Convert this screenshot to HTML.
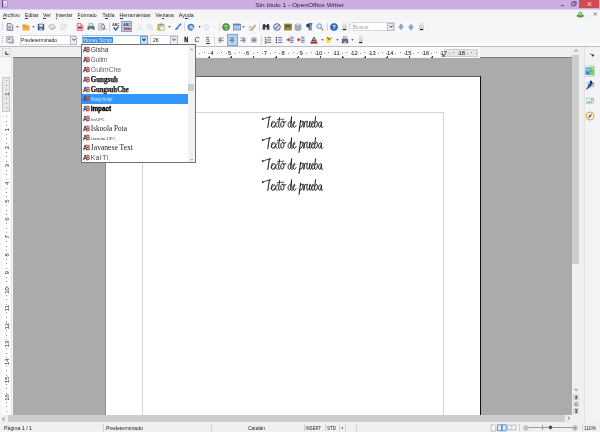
<!DOCTYPE html><html><head><meta charset="utf-8"><title>Sin título 1 - OpenOffice Writer</title><style>
html,body{margin:0;padding:0;}
body{width:600px;height:432px;overflow:hidden;background:#f5f5f8;font-family:"Liberation Sans",sans-serif;}
#r{position:relative;width:600px;height:432px;overflow:hidden;background:#f5f5f8;filter:blur(0.3px);}
#r div,#r span,#r svg{position:absolute;}
.t{white-space:nowrap;line-height:1;}
u{text-decoration:underline;text-decoration-thickness:0.5px;text-underline-offset:0.5px;}
</style></head><body><div id="r">
<div style="left:0px;top:0px;width:600px;height:9.2px;background:#ccade2;"></div>
<div style="left:0;top:8.600px;width:600px;height:1.400px;background:linear-gradient(#ccade2,#f8f4fb)"></div>
<svg style="left:0;top:0;overflow:visible" width="1" height="1"><text x="255.3" y="6.7" font-family="Liberation Sans" font-size="6.1" font-weight="normal" font-style="normal" fill="#2b2430" textLength="88.7" lengthAdjust="spacingAndGlyphs" >Sin título 1 - OpenOffice Writer</text></svg>
<svg style="left:2px;top:0.2px" width="6" height="7.6" viewBox="0 0 6 7.6"><path d="M0.5 0.4h3.400l1.700 1.700v5h-5.100z" fill="#f6f2fb" stroke="#6a5888" stroke-width="0.5"/><path d="M0.7 0.4v6.700" stroke="#3a2c5c" stroke-width="0.9"/><path d="M1.800 3.200l1.200 1.400 1.600-2.200M1.800 5.600h3" stroke="#7a70a8" stroke-width="0.6" fill="none"/></svg>
<div style="left:578.7px;top:0px;width:20px;height:7.7px;background:#d24a50;"></div>
<svg style="left:587px;top:1.6px" width="5" height="4.4" viewBox="0 0 5 4.4"><path d="M0.7 0.4l3.6 3.6M4.3 0.4l-3.6 3.6" stroke="#fff" stroke-width="0.9"/></svg>
<div style="left:560.7px;top:4.6px;width:3.6px;height:0.9px;background:#5a4c7c;"></div>
<svg style="left:570.8px;top:1px" width="6" height="5.5" viewBox="0 0 6 5.5"><rect x="0.6" y="1.8" width="3.4" height="3" fill="none" stroke="#5a4c7c" stroke-width="0.9"/><path d="M1.8 1.6V0.6h3.4v3h-1" fill="none" stroke="#5a4c7c" stroke-width="0.9"/></svg>
<div style="left:0px;top:9.5px;width:600px;height:10.5px;background:#f5f5f8;"></div>
<svg style="left:0;top:0;overflow:visible" width="1" height="1"><text x="2.9" y="17" font-family="Liberation Sans" font-size="5.8" font-weight="normal" font-style="normal" fill="#1c1c1c" textLength="17" lengthAdjust="spacingAndGlyphs" >Archivo</text></svg>
<div style="left:3px;top:17.6px;width:3.2px;height:0.55px;background:#3a3a3a;"></div>
<svg style="left:0;top:0;overflow:visible" width="1" height="1"><text x="25" y="17" font-family="Liberation Sans" font-size="5.8" font-weight="normal" font-style="normal" fill="#1c1c1c" textLength="13.5" lengthAdjust="spacingAndGlyphs" >Editar</text></svg>
<div style="left:25.1px;top:17.6px;width:2.599999999999998px;height:0.55px;background:#3a3a3a;"></div>
<svg style="left:0;top:0;overflow:visible" width="1" height="1"><text x="43" y="17" font-family="Liberation Sans" font-size="5.8" font-weight="normal" font-style="normal" fill="#1c1c1c" textLength="7.8" lengthAdjust="spacingAndGlyphs" >Ver</text></svg>
<div style="left:43.1px;top:17.6px;width:3.1999999999999957px;height:0.55px;background:#3a3a3a;"></div>
<svg style="left:0;top:0;overflow:visible" width="1" height="1"><text x="55.8" y="17" font-family="Liberation Sans" font-size="5.8" font-weight="normal" font-style="normal" fill="#1c1c1c" textLength="16.7" lengthAdjust="spacingAndGlyphs" >Insertar</text></svg>
<div style="left:55.9px;top:17.6px;width:1.2000000000000028px;height:0.55px;background:#3a3a3a;"></div>
<svg style="left:0;top:0;overflow:visible" width="1" height="1"><text x="77.5" y="17" font-family="Liberation Sans" font-size="5.8" font-weight="normal" font-style="normal" fill="#1c1c1c" textLength="19.2" lengthAdjust="spacingAndGlyphs" >Formato</text></svg>
<div style="left:77.7px;top:17.6px;width:2.5999999999999943px;height:0.55px;background:#3a3a3a;"></div>
<svg style="left:0;top:0;overflow:visible" width="1" height="1"><text x="102.5" y="17" font-family="Liberation Sans" font-size="5.8" font-weight="normal" font-style="normal" fill="#1c1c1c" textLength="12" lengthAdjust="spacingAndGlyphs" >Tabla</text></svg>
<div style="left:105.4px;top:17.6px;width:2.5999999999999943px;height:0.55px;background:#3a3a3a;"></div>
<svg style="left:0;top:0;overflow:visible" width="1" height="1"><text x="119.5" y="17" font-family="Liberation Sans" font-size="5.8" font-weight="normal" font-style="normal" fill="#1c1c1c" textLength="31" lengthAdjust="spacingAndGlyphs" >Herramientas</text></svg>
<div style="left:119.7px;top:17.6px;width:3.3999999999999915px;height:0.55px;background:#3a3a3a;"></div>
<svg style="left:0;top:0;overflow:visible" width="1" height="1"><text x="155.5" y="17" font-family="Liberation Sans" font-size="5.8" font-weight="normal" font-style="normal" fill="#1c1c1c" textLength="18.2" lengthAdjust="spacingAndGlyphs" >Ventana</text></svg>
<div style="left:161.6px;top:17.6px;width:2.700000000000017px;height:0.55px;background:#3a3a3a;"></div>
<svg style="left:0;top:0;overflow:visible" width="1" height="1"><text x="178.7" y="17" font-family="Liberation Sans" font-size="5.8" font-weight="normal" font-style="normal" fill="#1c1c1c" textLength="15" lengthAdjust="spacingAndGlyphs" >Ayuda</text></svg>
<div style="left:185.2px;top:17.6px;width:2.8000000000000114px;height:0.55px;background:#3a3a3a;"></div>
<svg style="left:576px;top:11px" width="9" height="7" viewBox="0 0 9 7"><ellipse cx="4.3" cy="5" rx="3.6" ry="1.4" fill="#4d9a3c"/><circle cx="4.3" cy="2.9" r="2.1" fill="#62b04e"/><circle cx="4.3" cy="2.7" r="1" fill="#d8f0d0"/></svg>
<svg style="left:592.5px;top:12.4px" width="4.6" height="4" viewBox="0 0 4.6 4"><path d="M0.5 0.4l3.6 3.2M4.1 0.4l-3.6 3.2" stroke="#5a5a60" stroke-width="0.7"/></svg>
<div style="left:0px;top:20px;width:600px;height:26px;background:#f5f6f8;"></div>
<div style="left:0;top:41.500px;width:600px;height:4.500px;background:linear-gradient(#f5f6f8,#fcfcfd 40%,#fdfdfe)"></div>
<div style="left:0px;top:46px;width:600px;height:1.2px;background:#bcbcc0;"></div>
<div style="left:0px;top:20.5px;width:424.5px;height:12.5px;background:#f8f8fb;"></div>
<div style="left:0px;top:33.5px;width:363.5px;height:12px;background:#f8f8fb;"></div>
<div style="left:2px;top:22px;width:1px;height:1px;background:#b8b8c4;"></div>
<div style="left:2px;top:24px;width:1px;height:1px;background:#b8b8c4;"></div>
<div style="left:2px;top:26px;width:1px;height:1px;background:#b8b8c4;"></div>
<div style="left:2px;top:28px;width:1px;height:1px;background:#b8b8c4;"></div>
<div style="left:2px;top:35.5px;width:1px;height:1px;background:#b8b8c4;"></div>
<div style="left:2px;top:37.5px;width:1px;height:1px;background:#b8b8c4;"></div>
<div style="left:2px;top:39.5px;width:1px;height:1px;background:#b8b8c4;"></div>
<div style="left:2px;top:41.5px;width:1px;height:1px;background:#b8b8c4;"></div>
<svg style="left:6.0px;top:22.5px;" width="8" height="8" viewBox="0 0 8 8"><path d="M1.2 0.6h3.8l1.8 1.8v5h-5.6z" fill="#e9edf4" stroke="#55627a" stroke-width="0.8"/><path d="M2.3 3.2h3M2.3 4.6h3M2.3 6h3" stroke="#6d7890" stroke-width="0.7"/></svg>
<svg style="left:16.0px;top:25.8px" width="3" height="2" viewBox="0 0 3 2"><path d="M0.3 0.3h2.4L1.5 1.7z" fill="#333"/></svg>
<svg style="left:21.5px;top:22.5px;" width="8" height="8" viewBox="0 0 8 8"><path d="M0.6 1.6h3l0.7 0.9h3v4.8h-6.7z" fill="#e88a24"/><path d="M1.4 3.5h5.6l0.6 3.8h-6.8z" fill="#f4ab43"/><path d="M4.2 0.5l2 1.4-1.5 1.6z" fill="#f9d36c"/></svg>
<svg style="left:32.0px;top:25.8px" width="3" height="2" viewBox="0 0 3 2"><path d="M0.3 0.3h2.4L1.5 1.7z" fill="#333"/></svg>
<svg style="left:37.2px;top:22.5px;" width="8" height="8" viewBox="0 0 8 8"><rect x="1.100" y="1" width="5.800" height="6" rx="0.5" fill="#3c5a86" stroke="#2a3e60" stroke-width="0.5"/><rect x="2.200" y="1.400" width="3.600" height="2.400" fill="#dfe8f4"/><rect x="2.600" y="5" width="2.800" height="2" fill="#a9bad3"/></svg>
<svg style="left:48.0px;top:22.5px;" width="8" height="8" viewBox="0 0 8 8"><path d="M0.6 2.6l4.6-1.4 2.4 3-4.8 2z" fill="#e4e6ea" stroke="#9aa0a8" stroke-width="0.6"/><path d="M2.6 6.3l4.8-1.9v1l-4.6 1.8z" fill="#d9b35c"/></svg>
<svg style="left:60.0px;top:22.5px;" width="8" height="8" viewBox="0 0 8 8"><path d="M1 1h4.5v6h-4.5z" fill="#eceef3" stroke="#dcdfe6" stroke-width="0.7"/><path d="M3 5.5l4-4" stroke="#dfe2ea" stroke-width="1.3"/></svg>
<svg style="left:76.0px;top:22.5px;" width="8" height="8" viewBox="0 0 8 8"><path d="M1.2 0.6h3.8l1.8 1.8v5h-5.6z" fill="#f7eeee" stroke="#c25660" stroke-width="0.8"/><path d="M2 3.4h4v2.4h-4z" fill="#c8323e"/><path d="M4.6 0.6v2h2" fill="none" stroke="#c25660" stroke-width="0.6"/></svg>
<svg style="left:86.5px;top:22.5px;" width="8" height="8" viewBox="0 0 8 8"><path d="M2 0.7h4v2.5h-4z" fill="#eef0f0" stroke="#7d8a86" stroke-width="0.6"/><path d="M0.6 3h6.8v3.2h-6.8z" fill="#5f7a74"/><path d="M0.6 5.2h6.8v1.6h-6.8z" fill="#3f5a56"/><path d="M2 5.6h4v1.8h-4z" fill="#e6e9e9"/></svg>
<svg style="left:97.5px;top:22.5px;" width="8" height="8" viewBox="0 0 8 8"><path d="M0.8 0.8h4.6v6.2h-4.6z" fill="#f2f3f6" stroke="#8a8f9a" stroke-width="0.7"/><circle cx="4.8" cy="3.6" r="1.9" fill="#e9eef4" stroke="#5c6470" stroke-width="0.8"/><path d="M6 5l1.6 1.8" stroke="#4c525c" stroke-width="1"/></svg>
<div style="left:109.3px;top:22px;width:0.7px;height:9px;background:#d6d6dc;"></div>
<svg style="left:111.5px;top:22.5px;" width="8" height="8" viewBox="0 0 8 8"><text x="0.3" y="3.2" font-family="Liberation Sans" font-weight="bold" font-size="3.6" fill="#7a2b3a" textLength="7.4" lengthAdjust="spacingAndGlyphs">ABC</text><path d="M1.6 4.4l2.2 2.6 2.8-3.6" stroke="#2f66a8" stroke-width="1.5" fill="none"/></svg>
<div style="left:121px;top:21px;width:11px;height:11px;background:#bcd6f0;box-sizing:border-box;border:0.6px solid #78a9d8"></div>
<svg style="left:122.5px;top:22.5px;" width="8" height="8" viewBox="0 0 8 8"><text x="0.3" y="3.4" font-family="Liberation Sans" font-weight="bold" font-size="3.6" fill="#3a3560" textLength="7.4" lengthAdjust="spacingAndGlyphs">ABC</text><path d="M0.5 5.2q0.9-1 1.75 0t1.75 0 1.75 0 1.75 0" stroke="#c4202c" stroke-width="1.1" fill="none"/><path d="M0.5 6.7h7" stroke="#c4202c" stroke-width="0.7"/></svg>
<svg style="left:136.0px;top:22.5px;" width="8" height="8" viewBox="0 0 8 8"><path d="M2 1l3.5 5M6 1l-3.5 5" stroke="#e1e3ea" stroke-width="0.9"/><circle cx="2.2" cy="6.4" r="1" fill="none" stroke="#e1e3ea" stroke-width="0.7"/><circle cx="5.8" cy="6.4" r="1" fill="none" stroke="#e1e3ea" stroke-width="0.7"/></svg>
<svg style="left:146.0px;top:22.5px;" width="8" height="8" viewBox="0 0 8 8"><path d="M1 1h3.6v4.4h-3.6z" fill="#eef0f4" stroke="#e0e3ea" stroke-width="0.7"/><path d="M3.2 2.8h3.6v4.4h-3.6z" fill="#eef0f4" stroke="#e0e3ea" stroke-width="0.7"/></svg>
<svg style="left:157.0px;top:22.5px;" width="8" height="8" viewBox="0 0 8 8"><path d="M0.8 1.4h6.2v5.8h-6.2z" fill="#d9c24e" stroke="#a08a30" stroke-width="0.6"/><path d="M2.6 0.6h2.6v1.6h-2.6z" fill="#8c8c8c"/><path d="M3 3h4.4v4.4h-4.4z" fill="#eef0e0" stroke="#a8a890" stroke-width="0.5"/></svg>
<svg style="left:167.9px;top:25.8px" width="3" height="2" viewBox="0 0 3 2"><path d="M0.3 0.3h2.4L1.5 1.7z" fill="#333"/></svg>
<svg style="left:173.5px;top:22.5px;" width="8" height="8" viewBox="0 0 8 8"><path d="M7.2 0.6l-3.6 3.6" stroke="#4a78b8" stroke-width="1.5"/><path d="M1 7.2q0.2-2.6 2.4-3.2l1 1q-0.6 2.2-3.4 2.2z" fill="#5a8ccc"/><path d="M2.8 4.6l1.2 1.2" stroke="#2c4f86" stroke-width="0.8"/></svg>
<div style="left:184.3px;top:22px;width:0.7px;height:9px;background:#d6d6dc;"></div>
<svg style="left:187.0px;top:22.5px;" width="8" height="8" viewBox="0 0 8 8"><circle cx="4" cy="4" r="3.3" fill="#a9c8e6"/><path d="M6.6 4.6a2.7 2.7 0 1 0-1.2 1.8" fill="none" stroke="#3d78b4" stroke-width="1.3"/><path d="M0.6 2.2l2.2 0.4-0.8 2z" fill="#2d64a0"/></svg>
<svg style="left:197.5px;top:25.8px" width="3" height="2" viewBox="0 0 3 2"><path d="M0.3 0.3h2.4L1.5 1.7z" fill="#333"/></svg>
<svg style="left:202.0px;top:22.5px;" width="8" height="8" viewBox="0 0 8 8"><circle cx="4" cy="4" r="3.1" fill="#eceff5"/><path d="M1.6 4.6a2.6 2.6 0 1 1 1.2 1.8" fill="none" stroke="#e0e4ec" stroke-width="1.1"/></svg>
<svg style="left:212.5px;top:25.8px" width="3" height="2" viewBox="0 0 3 2"><path d="M0.3 0.3h2.4L1.5 1.7z" fill="#d8dae2"/></svg>
<div style="left:218.6px;top:22px;width:0.7px;height:9px;background:#d6d6dc;"></div>
<svg style="left:221.5px;top:22.5px;" width="8" height="8" viewBox="0 0 8 8"><circle cx="4" cy="4" r="3.5" fill="#5a9a4e" stroke="#3d7036" stroke-width="0.6"/><path d="M2 2.6q2-1.6 3.8 0.2-0.4 1.6-2 1.4T2 2.6z" fill="#9cc888"/><path d="M3 5.4l2.4-0.4-0.4 1.8z" fill="#c0dcb0"/></svg>
<svg style="left:232.5px;top:22.5px;" width="8" height="8" viewBox="0 0 8 8"><rect x="0.6" y="1" width="6.8" height="6" fill="#dfe8f6" stroke="#4c6ea8" stroke-width="0.7"/><rect x="0.6" y="1" width="6.8" height="1.6" fill="#5a7cc0"/><path d="M0.6 4.2h6.8M0.6 5.7h6.8M2.9 1v6M5.2 1v6" stroke="#7c98cc" stroke-width="0.5"/></svg>
<svg style="left:242.2px;top:25.8px" width="3" height="2" viewBox="0 0 3 2"><path d="M0.3 0.3h2.4L1.5 1.7z" fill="#333"/></svg>
<svg style="left:248.0px;top:22.5px;" width="8" height="8" viewBox="0 0 8 8"><path d="M0.8 4.6q1.4-1.6 2.4 0t2 0" stroke="#6f86a8" stroke-width="0.8" fill="none"/><path d="M3.2 6.4l3.6-4.6 1 0.8-3.6 4.6-1.4 0.5z" fill="#d8b860" stroke="#8a7a50" stroke-width="0.4"/><path d="M0.6 6.8h3" stroke="#8c96a8" stroke-width="0.6"/></svg>
<div style="left:258.7px;top:22px;width:0.7px;height:9px;background:#d6d6dc;"></div>
<svg style="left:262.0px;top:22.5px;" width="8" height="8" viewBox="0 0 8 8"><path d="M0.6 3.4q0-2.6 1.4-2.6t1.4 1.6h1.2q0-1.6 1.4-1.6t1.4 2.6v3.4h-2.6v-2.6h-1.6v2.6h-2.6z" fill="#2e3238"/><path d="M1.2 5.2h1.6M5.2 5.2h1.6" stroke="#7d8794" stroke-width="0.6"/></svg>
<svg style="left:272.5px;top:22.5px;" width="8" height="8" viewBox="0 0 8 8"><circle cx="4" cy="4" r="3.3" fill="#dfe6f4" stroke="#4a62b0" stroke-width="1"/><path d="M1.6 6.4l3.4-2.6 1.4-2.2-3.4 2.6z" fill="#c8384a"/><path d="M1.6 6.4l2-2.6 1.4 0z" fill="#7a5a98"/></svg>
<svg style="left:283.5px;top:22.5px;" width="8" height="8" viewBox="0 0 8 8"><rect x="0.5" y="1" width="7" height="6" fill="#a8893c" stroke="#7a6228" stroke-width="0.6"/><rect x="1.8" y="2.4" width="4.4" height="3.2" fill="#4a4434"/><path d="M2.4 5.4l1.2-1.6 1 1 0.8-0.6 0.6 1.2z" fill="#d8c070"/></svg>
<svg style="left:294.0px;top:22.5px;" width="8" height="8" viewBox="0 0 8 8"><path d="M1 1.8v4.6q0 1.1 3 1.1t3-1.1v-4.6z" fill="#a8adb8"/><ellipse cx="4" cy="1.8" rx="3" ry="1.1" fill="#d4d8e0" stroke="#8a909c" stroke-width="0.4"/><path d="M1 1.8v4.6q0 1.1 3 1.1t3-1.1v-4.6" fill="none" stroke="#808692" stroke-width="0.5"/></svg>
<svg style="left:305.0px;top:22.5px;" width="8" height="8" viewBox="0 0 8 8"><path d="M4 0.8h3.4M4.2 0.8v6.6M6 0.8v6.6" stroke="#1f3f7a" stroke-width="1"/><path d="M4.4 0.6q-3.2 0-3.2 2t3.2 2z" fill="#1f3f7a"/></svg>
<svg style="left:315.5px;top:22.5px;" width="8" height="8" viewBox="0 0 8 8"><circle cx="3.2" cy="3.2" r="2.4" fill="#d6e8f6" stroke="#6f9ac4" stroke-width="0.9"/><path d="M5 5l2.4 2.4" stroke="#b08a50" stroke-width="1.3"/></svg>
<div style="left:327px;top:22px;width:0.7px;height:9px;background:#d6d6dc;"></div>
<svg style="left:330.0px;top:22.5px;" width="8" height="8" viewBox="0 0 8 8"><circle cx="4" cy="4" r="3.6" fill="#2f6cc0" stroke="#1f4c94" stroke-width="0.5"/><text x="4" y="6.3" text-anchor="middle" font-family="Liberation Sans" font-weight="bold" font-size="6" fill="#fff">?</text></svg>
<div style="left:342px;top:22px;width:4.5px;height:9px;background:linear-gradient(#f0f0f2,#d0d0d4 70%,#d8d8dc)"></div>
<div style="left:342.5px;top:28.8px;width:3.2px;height:1.4px;background:#222;"></div>
<div style="left:349.3px;top:22px;width:1px;height:1px;background:#b8b8c4;"></div>
<div style="left:349.3px;top:24px;width:1px;height:1px;background:#b8b8c4;"></div>
<div style="left:349.3px;top:26px;width:1px;height:1px;background:#b8b8c4;"></div>
<div style="left:349.3px;top:28px;width:1px;height:1px;background:#b8b8c4;"></div>
<div style="left:352.5px;top:22.3px;width:42px;height:9px;background:#fff;box-sizing:border-box;border:0.6px solid #d4d6de"></div>
<svg style="left:0;top:0;overflow:visible" width="1" height="1"><text x="353.8" y="28.6" font-family="Liberation Sans" font-size="5.6" font-weight="normal" font-style="normal" fill="#a4a6ae" textLength="15" lengthAdjust="spacingAndGlyphs" >Buscar</text></svg>
<div style="left:387px;top:22.8px;width:7px;height:8px;background:#eceef2;box-sizing:border-box;border:0.6px solid #b8bac4"></div>
<svg style="left:388.5px;top:25px" width="4" height="3.5" viewBox="0 0 4 3.5"><path d="M0.5 0.6l1.5 1.9 1.5-1.9" stroke="#333" stroke-width="0.9" fill="none"/></svg>
<svg style="left:396.5px;top:22.5px;" width="8" height="8" viewBox="0 0 8 8"><path d="M3 1.2h2v2.4h1.6l-2.600 3.200-2.600-3.200h1.600z" fill="#8aa8cc" stroke="#6a8ab4" stroke-width="0.4"/></svg>
<svg style="left:407.0px;top:22.5px;" width="8" height="8" viewBox="0 0 8 8"><path d="M3 6.800h2v-2.400h1.600l-2.600-3.200-2.600 3.200h1.600z" fill="#8aa8cc" stroke="#6a8ab4" stroke-width="0.4"/></svg>
<div style="left:419.3px;top:22px;width:4.5px;height:9px;background:linear-gradient(#f0f0f2,#d0d0d4 70%,#d8d8dc)"></div>
<div style="left:419.8px;top:28.8px;width:3.2px;height:1.4px;background:#222;"></div>
<svg style="left:6.0px;top:36.0px;" width="8" height="8" viewBox="0 0 8 8"><rect x="0.8" y="0.8" width="6" height="5.4" fill="#e6e9ee" stroke="#70788a" stroke-width="0.7"/><rect x="1.8" y="1.8" width="2.6" height="2" fill="#8c96aa"/><path d="M3 7.2h4.4V3" fill="none" stroke="#8a90a0" stroke-width="0.7"/></svg>
<div style="left:19.5px;top:35.3px;width:57px;height:9.8px;background:#fff;box-sizing:border-box;border:0.6px solid #d4d6de"></div>
<svg style="left:0;top:0;overflow:visible" width="1" height="1"><text x="21" y="42" font-family="Liberation Sans" font-size="5.7" font-weight="normal" font-style="normal" fill="#222" textLength="36.2" lengthAdjust="spacingAndGlyphs" >Predeterminado</text></svg>
<div style="left:70px;top:35.8px;width:6.5px;height:8.8px;background:#eceef2;box-sizing:border-box;border:0.6px solid #b8bac4"></div>
<svg style="left:71.5px;top:38.4px" width="4" height="3.5" viewBox="0 0 4 3.5"><path d="M0.5 0.6l1.5 1.9 1.5-1.9" stroke="#333" stroke-width="0.9" fill="none"/></svg>
<div style="left:81.5px;top:35.3px;width:66.5px;height:9.8px;background:#fff;box-sizing:border-box;border:0.6px solid #9ec0e4"></div>
<div style="left:83px;top:37px;width:29.5px;height:5.8px;background:#3a8ee6;"></div>
<svg style="left:0;top:0;overflow:visible" width="1" height="1"><text x="83.5" y="41.8" font-family="Liberation Sans" font-size="5.5" font-weight="normal" font-style="normal" fill="#e8f2ff" textLength="28.5" lengthAdjust="spacingAndGlyphs" >Honey Script</text></svg>
<div style="left:139.5px;top:35.8px;width:8px;height:8.8px;background:#c4ddf5;box-sizing:border-box;border:0.6px solid #6aa2d8"></div>
<svg style="left:141.5px;top:38.4px" width="4" height="3.5" viewBox="0 0 4 3.5"><path d="M0.5 0.6l1.5 1.9 1.5-1.9" stroke="#173a6a" stroke-width="1.1" fill="none"/></svg>
<div style="left:150px;top:35.3px;width:28px;height:9.8px;background:#fff;box-sizing:border-box;border:0.6px solid #d4d6de"></div>
<svg style="left:0;top:0;overflow:visible" width="1" height="1"><text x="153" y="42" font-family="Liberation Sans" font-size="5.6" font-weight="normal" font-style="normal" fill="#222" textLength="5.6" lengthAdjust="spacingAndGlyphs" >26</text></svg>
<div style="left:169.5px;top:35.8px;width:8px;height:8.8px;background:#eceef2;box-sizing:border-box;border:0.6px solid #b8bac4"></div>
<svg style="left:171.5px;top:38.4px" width="4" height="3.5" viewBox="0 0 4 3.5"><path d="M0.5 0.6l1.5 1.9 1.5-1.9" stroke="#333" stroke-width="0.9" fill="none"/></svg>
<svg style="left:0;top:0;overflow:visible" width="1" height="1"><text x="184.3" y="42" font-family="Liberation Sans" font-size="7" font-weight="bold" font-style="normal" fill="#111" textLength="4" lengthAdjust="spacingAndGlyphs" stroke="#111" stroke-width="0.3">N</text></svg>
<svg style="left:0;top:0;overflow:visible" width="1" height="1"><text x="194.6" y="42" font-family="Liberation Sans" font-size="7.2" font-weight="normal" font-style="italic" fill="#222" textLength="5" lengthAdjust="spacingAndGlyphs" >C</text></svg>
<svg style="left:0;top:0;overflow:visible" width="1" height="1"><text x="206" y="41.6" font-family="Liberation Sans" font-size="6.8" font-weight="normal" font-style="normal" fill="#222" textLength="3.6" lengthAdjust="spacingAndGlyphs" >S</text></svg>
<div style="left:205.6px;top:42.6px;width:4.2px;height:0.7px;background:#333;"></div>
<div style="left:214.3px;top:35.5px;width:0.7px;height:9px;background:#d6d6dc;"></div>
<svg style="left:217.3px;top:36.0px;" width="8" height="8" viewBox="0 0 8 8"><rect x="1.5" y="1.6" width="5" height="0.8" fill="#6a6e78"/><rect x="1.5" y="2.9000000000000004" width="3.2" height="0.8" fill="#6a6e78"/><rect x="1.5" y="4.2" width="5" height="0.8" fill="#6a6e78"/><rect x="1.5" y="5.5" width="3.2" height="0.8" fill="#6a6e78"/></svg>
<div style="left:227px;top:33.8px;width:10.5px;height:12.2px;background:#b6d6f6;box-sizing:border-box;border:0.6px solid #6aa8e6"></div>
<svg style="left:228.2px;top:36.0px;" width="8" height="8" viewBox="0 0 8 8"><rect x="1.5" y="1.6" width="5" height="0.8" fill="#6a6e78"/><rect x="2.4" y="2.9000000000000004" width="3.2" height="0.8" fill="#6a6e78"/><rect x="1.5" y="4.2" width="5" height="0.8" fill="#6a6e78"/><rect x="2.4" y="5.5" width="3.2" height="0.8" fill="#6a6e78"/></svg>
<svg style="left:239.0px;top:36.0px;" width="8" height="8" viewBox="0 0 8 8"><rect x="1.5" y="1.6" width="5" height="0.8" fill="#6a6e78"/><rect x="3.3" y="2.9000000000000004" width="3.2" height="0.8" fill="#6a6e78"/><rect x="1.5" y="4.2" width="5" height="0.8" fill="#6a6e78"/><rect x="3.3" y="5.5" width="3.2" height="0.8" fill="#6a6e78"/></svg>
<svg style="left:249.7px;top:36.0px;" width="8" height="8" viewBox="0 0 8 8"><rect x="1.5" y="1.6" width="5" height="0.8" fill="#6a6e78"/><rect x="1.5" y="2.9000000000000004" width="5" height="0.8" fill="#6a6e78"/><rect x="1.5" y="4.2" width="5" height="0.8" fill="#6a6e78"/><rect x="1.5" y="5.5" width="5" height="0.8" fill="#6a6e78"/></svg>
<div style="left:260.5px;top:35.5px;width:0.7px;height:9px;background:#d6d6dc;"></div>
<svg style="left:264.0px;top:36.0px;" width="8" height="8" viewBox="0 0 8 8"><path d="M3.2 1.6h4M3.2 4h4M3.2 6.4h4" stroke="#5a5e68" stroke-width="0.9"/><path d="M1.2 0.8v1.8M1 3.2h1v1.6M0.8 5.6h1.4v1.6h-1.4" stroke="#2a2e3a" stroke-width="0.7" fill="none"/></svg>
<svg style="left:274.5px;top:36.0px;" width="8" height="8" viewBox="0 0 8 8"><path d="M3.2 1.6h4M3.2 4h4M3.2 6.4h4" stroke="#3d6aa8" stroke-width="0.9"/><rect x="0.8" y="1" width="1.3" height="1.3" fill="#222"/><rect x="0.8" y="3.4" width="1.3" height="1.3" fill="#222"/><rect x="0.8" y="5.8" width="1.3" height="1.3" fill="#222"/></svg>
<svg style="left:285.5px;top:36.0px;" width="8" height="8" viewBox="0 0 8 8"><path d="M4 1.2h3.6M4 2.9h3.6M4 4.6h3.6M4 6.3h3.6" stroke="#3d6aa8" stroke-width="0.8"/><path d="M0.4 3.8l2.6-2v1.2h1.2v1.6h-1.2v1.2z" fill="#d43a3a"/></svg>
<svg style="left:296.5px;top:36.0px;" width="8" height="8" viewBox="0 0 8 8"><path d="M4 1.2h3.6M4 2.9h3.6M4 4.6h3.6M4 6.3h3.6" stroke="#3d6aa8" stroke-width="0.8"/><path d="M3.6 3.8l-2.6-2v1.2h-0.8v1.6h0.8v1.2z" fill="#d43a3a"/></svg>
<svg style="left:310.0px;top:36.0px;" width="8" height="8" viewBox="0 0 8 8"><path d="M1 5.6l3-5 3 5z" fill="#3a3e48"/><path d="M3 4.2h2l-1-2z" fill="#f5f6fa"/><rect x="0.6" y="5.8" width="6.8" height="1.8" fill="#c0202c"/></svg>
<svg style="left:320.5px;top:39.3px" width="3" height="2" viewBox="0 0 3 2"><path d="M0.3 0.3h2.4L1.5 1.7z" fill="#333"/></svg>
<svg style="left:325.0px;top:36.0px;" width="8" height="8" viewBox="0 0 8 8"><path d="M1 4q0-2 2.4-2.4l2.8 1.2-0.6 3q-1.6 1.6-3.4 1.2T1 4z" fill="#f2e23a"/><path d="M2.4 0.8l3 2.2-1 1.2-2.8-2.2z" fill="#7a7440"/><path d="M5.4 3l1.6-1.4" stroke="#55555a" stroke-width="0.8"/></svg>
<svg style="left:335.5px;top:39.3px" width="3" height="2" viewBox="0 0 3 2"><path d="M0.3 0.3h2.4L1.5 1.7z" fill="#333"/></svg>
<svg style="left:340.5px;top:36.0px;" width="8" height="8" viewBox="0 0 8 8"><path d="M2.2 0.6h3.2v2.2h-3.2z" fill="#dfe3e8" stroke="#5a6270" stroke-width="0.5"/><path d="M0.8 2.8h6.4v2.6h-6.4z" fill="#5f6f88"/><path d="M0.8 5.4h6.4v1.8h-6.4z" fill="#2f3f5a"/><path d="M2.4 5.8h3.2v1h-3.2z" fill="#dfe3e8"/></svg>
<svg style="left:351.0px;top:39.3px" width="3" height="2" viewBox="0 0 3 2"><path d="M0.3 0.3h2.4L1.5 1.7z" fill="#333"/></svg>
<div style="left:358.5px;top:35px;width:4.5px;height:9px;background:linear-gradient(#f0f0f2,#d0d0d4 70%,#d8d8dc)"></div>
<div style="left:359.0px;top:41.8px;width:3.2px;height:1.4px;background:#222;"></div>
<div style="left:0px;top:47px;width:600px;height:11px;background:#f0f0f0;"></div>
<div style="left:12.5px;top:58px;width:559.5px;height:357px;background:#ababab;"></div>
<div style="left:12.5px;top:57.2px;width:559.5px;height:1.1px;background:#7c7c7c;"></div>
<div style="left:106px;top:76px;width:374px;height:339px;background:#ffffff;"></div>
<div style="left:105.6px;top:75.8px;width:374.4px;height:0.8px;background:#606060;"></div>
<div style="left:105.2px;top:76px;width:0.9px;height:339px;background:#8c8c8c;"></div>
<div style="left:479.5px;top:76px;width:1.2px;height:339px;background:#111;"></div>
<div style="left:142px;top:112px;width:302px;height:0.6px;background:#d4d4d4;"></div>
<div style="left:142px;top:112px;width:0.6px;height:303px;background:#d4d4d4;"></div>
<div style="left:443.4px;top:112px;width:0.6px;height:303px;background:#d4d4d4;"></div>
<div style="left:0px;top:58px;width:12.5px;height:357px;background:#f7f7f7;"></div>
<div style="left:11.3px;top:58px;width:1.2px;height:357px;background:#e4e4e4;"></div>
<div style="left:2px;top:77px;width:8.4px;height:35px;background:#e8e8e8;box-sizing:border-box;border:0.5px solid #c8c8c8"></div>
<div style="left:2px;top:112px;width:8.4px;height:303px;background:#fefefe;"></div>
<div style="left:572px;top:47px;width:11.5px;height:375px;background:#f0f0f0;"></div>
<div style="left:572.2px;top:54.5px;width:7.2px;height:209px;background:#cdcdcd;"></div>
<div style="left:0px;top:415px;width:572px;height:7px;background:#f0f0f0;"></div>
<div style="left:7.5px;top:415.3px;width:557.3px;height:6.4px;background:#cdcdcd;"></div>
<div style="left:583.5px;top:47px;width:16.5px;height:375px;background:#f3f3f5;"></div>
<div style="left:583.5px;top:47px;width:0.6px;height:375px;background:#e2e2e6;"></div>
<div style="left:106px;top:47px;width:374px;height:11px;background:#fbfbfb;"></div>
<div style="left:106.3px;top:48.6px;width:35.4px;height:8.2px;background:#e6e6e6;box-sizing:border-box;border:0.5px solid #cfcfcf"></div>
<div style="left:443.6px;top:48.6px;width:34.8px;height:8.2px;background:#e6e6e6;box-sizing:border-box;border:0.5px solid #cfcfcf"></div>
<div style="left:114.275px;top:52.2px;width:0.7px;height:1.3px;background:#8a8a8a;"></div>
<div style="left:109.81250000000001px;top:52.5px;width:0.7px;height:0.8px;background:#9a9a9a;"></div>
<div style="left:118.73750000000001px;top:52.5px;width:0.7px;height:0.8px;background:#9a9a9a;"></div>
<svg style="left:0;top:0;overflow:visible" width="1" height="1"><text x="122.55000000000001" y="55.4" font-family="Liberation Sans" font-size="5.8" font-weight="normal" font-style="normal" fill="#111" text-anchor="middle">1</text></svg>
<div style="left:132.12500000000003px;top:52.2px;width:0.7px;height:1.3px;background:#8a8a8a;"></div>
<div style="left:127.66250000000002px;top:52.5px;width:0.7px;height:0.8px;background:#9a9a9a;"></div>
<div style="left:136.5875px;top:52.5px;width:0.7px;height:0.8px;background:#9a9a9a;"></div>
<div style="left:149.97500000000002px;top:52.2px;width:0.7px;height:1.3px;background:#8a8a8a;"></div>
<div style="left:145.51250000000002px;top:52.5px;width:0.7px;height:0.8px;background:#9a9a9a;"></div>
<div style="left:154.4375px;top:52.5px;width:0.7px;height:0.8px;background:#9a9a9a;"></div>
<svg style="left:0;top:0;overflow:visible" width="1" height="1"><text x="158.25" y="55.4" font-family="Liberation Sans" font-size="5.8" font-weight="normal" font-style="normal" fill="#111" text-anchor="middle">1</text></svg>
<div style="left:167.82500000000002px;top:52.2px;width:0.7px;height:1.3px;background:#8a8a8a;"></div>
<div style="left:163.3625px;top:52.5px;width:0.7px;height:0.8px;background:#9a9a9a;"></div>
<div style="left:172.2875px;top:52.5px;width:0.7px;height:0.8px;background:#9a9a9a;"></div>
<svg style="left:0;top:0;overflow:visible" width="1" height="1"><text x="176.10000000000002" y="55.4" font-family="Liberation Sans" font-size="5.8" font-weight="normal" font-style="normal" fill="#111" text-anchor="middle">2</text></svg>
<div style="left:185.67500000000004px;top:52.2px;width:0.7px;height:1.3px;background:#8a8a8a;"></div>
<div style="left:181.21250000000003px;top:52.5px;width:0.7px;height:0.8px;background:#9a9a9a;"></div>
<div style="left:190.13750000000002px;top:52.5px;width:0.7px;height:0.8px;background:#9a9a9a;"></div>
<svg style="left:0;top:0;overflow:visible" width="1" height="1"><text x="193.95000000000002" y="55.4" font-family="Liberation Sans" font-size="5.8" font-weight="normal" font-style="normal" fill="#111" text-anchor="middle">3</text></svg>
<div style="left:203.52500000000003px;top:52.2px;width:0.7px;height:1.3px;background:#8a8a8a;"></div>
<div style="left:199.06250000000003px;top:52.5px;width:0.7px;height:0.8px;background:#9a9a9a;"></div>
<div style="left:207.9875px;top:52.5px;width:0.7px;height:0.8px;background:#9a9a9a;"></div>
<svg style="left:0;top:0;overflow:visible" width="1" height="1"><text x="211.8" y="55.4" font-family="Liberation Sans" font-size="5.8" font-weight="normal" font-style="normal" fill="#111" text-anchor="middle">4</text></svg>
<div style="left:221.37500000000003px;top:52.2px;width:0.7px;height:1.3px;background:#8a8a8a;"></div>
<div style="left:216.91250000000002px;top:52.5px;width:0.7px;height:0.8px;background:#9a9a9a;"></div>
<div style="left:225.8375px;top:52.5px;width:0.7px;height:0.8px;background:#9a9a9a;"></div>
<svg style="left:0;top:0;overflow:visible" width="1" height="1"><text x="229.65" y="55.4" font-family="Liberation Sans" font-size="5.8" font-weight="normal" font-style="normal" fill="#111" text-anchor="middle">5</text></svg>
<div style="left:239.22500000000002px;top:52.2px;width:0.7px;height:1.3px;background:#8a8a8a;"></div>
<div style="left:234.76250000000002px;top:52.5px;width:0.7px;height:0.8px;background:#9a9a9a;"></div>
<div style="left:243.6875px;top:52.5px;width:0.7px;height:0.8px;background:#9a9a9a;"></div>
<svg style="left:0;top:0;overflow:visible" width="1" height="1"><text x="247.5" y="55.4" font-family="Liberation Sans" font-size="5.8" font-weight="normal" font-style="normal" fill="#111" text-anchor="middle">6</text></svg>
<div style="left:257.075px;top:52.2px;width:0.7px;height:1.3px;background:#8a8a8a;"></div>
<div style="left:252.6125px;top:52.5px;width:0.7px;height:0.8px;background:#9a9a9a;"></div>
<div style="left:261.53749999999997px;top:52.5px;width:0.7px;height:0.8px;background:#9a9a9a;"></div>
<svg style="left:0;top:0;overflow:visible" width="1" height="1"><text x="265.35" y="55.4" font-family="Liberation Sans" font-size="5.8" font-weight="normal" font-style="normal" fill="#111" text-anchor="middle">7</text></svg>
<div style="left:274.925px;top:52.2px;width:0.7px;height:1.3px;background:#8a8a8a;"></div>
<div style="left:270.4625px;top:52.5px;width:0.7px;height:0.8px;background:#9a9a9a;"></div>
<div style="left:279.3875px;top:52.5px;width:0.7px;height:0.8px;background:#9a9a9a;"></div>
<svg style="left:0;top:0;overflow:visible" width="1" height="1"><text x="283.20000000000005" y="55.4" font-family="Liberation Sans" font-size="5.8" font-weight="normal" font-style="normal" fill="#111" text-anchor="middle">8</text></svg>
<div style="left:292.77500000000003px;top:52.2px;width:0.7px;height:1.3px;background:#8a8a8a;"></div>
<div style="left:288.3125px;top:52.5px;width:0.7px;height:0.8px;background:#9a9a9a;"></div>
<div style="left:297.2375px;top:52.5px;width:0.7px;height:0.8px;background:#9a9a9a;"></div>
<svg style="left:0;top:0;overflow:visible" width="1" height="1"><text x="301.05" y="55.4" font-family="Liberation Sans" font-size="5.8" font-weight="normal" font-style="normal" fill="#111" text-anchor="middle">9</text></svg>
<div style="left:310.625px;top:52.2px;width:0.7px;height:1.3px;background:#8a8a8a;"></div>
<div style="left:306.16249999999997px;top:52.5px;width:0.7px;height:0.8px;background:#9a9a9a;"></div>
<div style="left:315.0875px;top:52.5px;width:0.7px;height:0.8px;background:#9a9a9a;"></div>
<svg style="left:0;top:0;overflow:visible" width="1" height="1"><text x="318.9" y="55.4" font-family="Liberation Sans" font-size="5.8" font-weight="normal" font-style="normal" fill="#111" text-anchor="middle">10</text></svg>
<div style="left:328.47499999999997px;top:52.2px;width:0.7px;height:1.3px;background:#8a8a8a;"></div>
<div style="left:324.01249999999993px;top:52.5px;width:0.7px;height:0.8px;background:#9a9a9a;"></div>
<div style="left:332.93749999999994px;top:52.5px;width:0.7px;height:0.8px;background:#9a9a9a;"></div>
<svg style="left:0;top:0;overflow:visible" width="1" height="1"><text x="336.75" y="55.4" font-family="Liberation Sans" font-size="5.8" font-weight="normal" font-style="normal" fill="#111" text-anchor="middle">11</text></svg>
<div style="left:346.325px;top:52.2px;width:0.7px;height:1.3px;background:#8a8a8a;"></div>
<div style="left:341.86249999999995px;top:52.5px;width:0.7px;height:0.8px;background:#9a9a9a;"></div>
<div style="left:350.78749999999997px;top:52.5px;width:0.7px;height:0.8px;background:#9a9a9a;"></div>
<svg style="left:0;top:0;overflow:visible" width="1" height="1"><text x="354.6" y="55.4" font-family="Liberation Sans" font-size="5.8" font-weight="normal" font-style="normal" fill="#111" text-anchor="middle">12</text></svg>
<div style="left:364.175px;top:52.2px;width:0.7px;height:1.3px;background:#8a8a8a;"></div>
<div style="left:359.7125px;top:52.5px;width:0.7px;height:0.8px;background:#9a9a9a;"></div>
<div style="left:368.6375px;top:52.5px;width:0.7px;height:0.8px;background:#9a9a9a;"></div>
<svg style="left:0;top:0;overflow:visible" width="1" height="1"><text x="372.45000000000005" y="55.4" font-family="Liberation Sans" font-size="5.8" font-weight="normal" font-style="normal" fill="#111" text-anchor="middle">13</text></svg>
<div style="left:382.02500000000003px;top:52.2px;width:0.7px;height:1.3px;background:#8a8a8a;"></div>
<div style="left:377.5625px;top:52.5px;width:0.7px;height:0.8px;background:#9a9a9a;"></div>
<div style="left:386.4875px;top:52.5px;width:0.7px;height:0.8px;background:#9a9a9a;"></div>
<svg style="left:0;top:0;overflow:visible" width="1" height="1"><text x="390.30000000000007" y="55.4" font-family="Liberation Sans" font-size="5.8" font-weight="normal" font-style="normal" fill="#111" text-anchor="middle">14</text></svg>
<div style="left:399.87500000000006px;top:52.2px;width:0.7px;height:1.3px;background:#8a8a8a;"></div>
<div style="left:395.4125px;top:52.5px;width:0.7px;height:0.8px;background:#9a9a9a;"></div>
<div style="left:404.33750000000003px;top:52.5px;width:0.7px;height:0.8px;background:#9a9a9a;"></div>
<svg style="left:0;top:0;overflow:visible" width="1" height="1"><text x="408.15" y="55.4" font-family="Liberation Sans" font-size="5.8" font-weight="normal" font-style="normal" fill="#111" text-anchor="middle">15</text></svg>
<div style="left:417.72499999999997px;top:52.2px;width:0.7px;height:1.3px;background:#8a8a8a;"></div>
<div style="left:413.26249999999993px;top:52.5px;width:0.7px;height:0.8px;background:#9a9a9a;"></div>
<div style="left:422.18749999999994px;top:52.5px;width:0.7px;height:0.8px;background:#9a9a9a;"></div>
<svg style="left:0;top:0;overflow:visible" width="1" height="1"><text x="426.0" y="55.4" font-family="Liberation Sans" font-size="5.8" font-weight="normal" font-style="normal" fill="#111" text-anchor="middle">16</text></svg>
<div style="left:435.575px;top:52.2px;width:0.7px;height:1.3px;background:#8a8a8a;"></div>
<div style="left:431.11249999999995px;top:52.5px;width:0.7px;height:0.8px;background:#9a9a9a;"></div>
<div style="left:440.03749999999997px;top:52.5px;width:0.7px;height:0.8px;background:#9a9a9a;"></div>
<svg style="left:0;top:0;overflow:visible" width="1" height="1"><text x="443.85" y="55.4" font-family="Liberation Sans" font-size="5.8" font-weight="normal" font-style="normal" fill="#111" text-anchor="middle">17</text></svg>
<div style="left:453.425px;top:52.2px;width:0.7px;height:1.3px;background:#8a8a8a;"></div>
<div style="left:448.9625px;top:52.5px;width:0.7px;height:0.8px;background:#9a9a9a;"></div>
<div style="left:457.8875px;top:52.5px;width:0.7px;height:0.8px;background:#9a9a9a;"></div>
<svg style="left:0;top:0;overflow:visible" width="1" height="1"><text x="461.70000000000005" y="55.4" font-family="Liberation Sans" font-size="5.8" font-weight="normal" font-style="normal" fill="#111" text-anchor="middle">18</text></svg>
<div style="left:471.27500000000003px;top:52.2px;width:0.7px;height:1.3px;background:#8a8a8a;"></div>
<div style="left:466.8125px;top:52.5px;width:0.7px;height:0.8px;background:#9a9a9a;"></div>
<div style="left:475.7375px;top:52.5px;width:0.7px;height:0.8px;background:#9a9a9a;"></div>
<div style="left:163.4px;top:56.5px;width:1.8px;height:0.6px;background:#444;"></div>
<div style="left:164.0px;top:55.6px;width:0.6px;height:1.2px;background:#444;"></div>
<div style="left:185.7px;top:56.5px;width:1.8px;height:0.6px;background:#444;"></div>
<div style="left:186.29999999999998px;top:55.6px;width:0.6px;height:1.2px;background:#444;"></div>
<div style="left:208.0px;top:56.5px;width:1.8px;height:0.6px;background:#444;"></div>
<div style="left:208.6px;top:55.6px;width:0.6px;height:1.2px;background:#444;"></div>
<div style="left:230.29999999999998px;top:56.5px;width:1.8px;height:0.6px;background:#444;"></div>
<div style="left:230.89999999999998px;top:55.6px;width:0.6px;height:1.2px;background:#444;"></div>
<div style="left:252.6px;top:56.5px;width:1.8px;height:0.6px;background:#444;"></div>
<div style="left:253.2px;top:55.6px;width:0.6px;height:1.2px;background:#444;"></div>
<div style="left:274.90000000000003px;top:56.5px;width:1.8px;height:0.6px;background:#444;"></div>
<div style="left:275.5px;top:55.6px;width:0.6px;height:1.2px;background:#444;"></div>
<div style="left:297.20000000000005px;top:56.5px;width:1.8px;height:0.6px;background:#444;"></div>
<div style="left:297.8px;top:55.6px;width:0.6px;height:1.2px;background:#444;"></div>
<div style="left:319.5px;top:56.5px;width:1.8px;height:0.6px;background:#444;"></div>
<div style="left:320.09999999999997px;top:55.6px;width:0.6px;height:1.2px;background:#444;"></div>
<div style="left:341.80000000000007px;top:56.5px;width:1.8px;height:0.6px;background:#444;"></div>
<div style="left:342.40000000000003px;top:55.6px;width:0.6px;height:1.2px;background:#444;"></div>
<div style="left:364.1px;top:56.5px;width:1.8px;height:0.6px;background:#444;"></div>
<div style="left:364.7px;top:55.6px;width:0.6px;height:1.2px;background:#444;"></div>
<div style="left:386.40000000000003px;top:56.5px;width:1.8px;height:0.6px;background:#444;"></div>
<div style="left:387.0px;top:55.6px;width:0.6px;height:1.2px;background:#444;"></div>
<div style="left:408.70000000000005px;top:56.5px;width:1.8px;height:0.6px;background:#444;"></div>
<div style="left:409.3px;top:55.6px;width:0.6px;height:1.2px;background:#444;"></div>
<div style="left:431.00000000000006px;top:56.5px;width:1.8px;height:0.6px;background:#444;"></div>
<div style="left:431.6px;top:55.6px;width:0.6px;height:1.2px;background:#444;"></div>
<div style="left:2px;top:47.5px;width:9px;height:9.5px;background:#f0f0f0;box-sizing:border-box;border:0.6px solid #dcdcdc"></div>
<svg style="left:4.5px;top:50.5px" width="4" height="4" viewBox="0 0 4 4"><path d="M0.8 0.5v2.8h2.8" stroke="#222" stroke-width="1" fill="none"/></svg>
<svg style="left:139.5px;top:47.5px" width="5" height="9" viewBox="0 0 5 9"><path d="M0.5 0.3h4L2.5 3z" fill="#888"/><path d="M0.5 8.7h4L2.5 6z" fill="#888"/></svg>
<svg style="left:441px;top:52.5px" width="5" height="4" viewBox="0 0 5 4"><path d="M0.5 3.7h4L2.5 1z" fill="#666"/></svg>
<div style="left:6px;top:84.875px;width:1.2px;height:0.7px;background:#8a8a8a;"></div>
<div style="left:6.3px;top:80.41250000000001px;width:0.8px;height:0.7px;background:#9a9a9a;"></div>
<div style="left:6.3px;top:89.3375px;width:0.8px;height:0.7px;background:#9a9a9a;"></div>
<svg style="left:0;top:0;overflow:visible" width="1" height="1"><text x="0" y="0" font-family="Liberation Sans" font-size="5.8" font-weight="normal" font-style="normal" fill="#111" text-anchor="middle" transform="translate(8.5 94.15) rotate(-90)">1</text></svg>
<div style="left:6px;top:102.72500000000001px;width:1.2px;height:0.7px;background:#8a8a8a;"></div>
<div style="left:6.3px;top:98.26250000000002px;width:0.8px;height:0.7px;background:#9a9a9a;"></div>
<div style="left:6.3px;top:107.18750000000001px;width:0.8px;height:0.7px;background:#9a9a9a;"></div>
<div style="left:6px;top:120.575px;width:1.2px;height:0.7px;background:#8a8a8a;"></div>
<div style="left:6.3px;top:116.11250000000001px;width:0.8px;height:0.7px;background:#9a9a9a;"></div>
<div style="left:6.3px;top:125.03750000000001px;width:0.8px;height:0.7px;background:#9a9a9a;"></div>
<svg style="left:0;top:0;overflow:visible" width="1" height="1"><text x="0" y="0" font-family="Liberation Sans" font-size="5.8" font-weight="normal" font-style="normal" fill="#111" text-anchor="middle" transform="translate(8.5 129.85) rotate(-90)">1</text></svg>
<div style="left:6px;top:138.425px;width:1.2px;height:0.7px;background:#8a8a8a;"></div>
<div style="left:6.3px;top:133.9625px;width:0.8px;height:0.7px;background:#9a9a9a;"></div>
<div style="left:6.3px;top:142.8875px;width:0.8px;height:0.7px;background:#9a9a9a;"></div>
<svg style="left:0;top:0;overflow:visible" width="1" height="1"><text x="0" y="0" font-family="Liberation Sans" font-size="5.8" font-weight="normal" font-style="normal" fill="#111" text-anchor="middle" transform="translate(8.5 147.7) rotate(-90)">2</text></svg>
<div style="left:6px;top:156.275px;width:1.2px;height:0.7px;background:#8a8a8a;"></div>
<div style="left:6.3px;top:151.8125px;width:0.8px;height:0.7px;background:#9a9a9a;"></div>
<div style="left:6.3px;top:160.73749999999998px;width:0.8px;height:0.7px;background:#9a9a9a;"></div>
<svg style="left:0;top:0;overflow:visible" width="1" height="1"><text x="0" y="0" font-family="Liberation Sans" font-size="5.8" font-weight="normal" font-style="normal" fill="#111" text-anchor="middle" transform="translate(8.5 165.55) rotate(-90)">3</text></svg>
<div style="left:6px;top:174.12500000000003px;width:1.2px;height:0.7px;background:#8a8a8a;"></div>
<div style="left:6.3px;top:169.66250000000002px;width:0.8px;height:0.7px;background:#9a9a9a;"></div>
<div style="left:6.3px;top:178.5875px;width:0.8px;height:0.7px;background:#9a9a9a;"></div>
<svg style="left:0;top:0;overflow:visible" width="1" height="1"><text x="0" y="0" font-family="Liberation Sans" font-size="5.8" font-weight="normal" font-style="normal" fill="#111" text-anchor="middle" transform="translate(8.5 183.4) rotate(-90)">4</text></svg>
<div style="left:6px;top:191.97500000000002px;width:1.2px;height:0.7px;background:#8a8a8a;"></div>
<div style="left:6.3px;top:187.51250000000002px;width:0.8px;height:0.7px;background:#9a9a9a;"></div>
<div style="left:6.3px;top:196.4375px;width:0.8px;height:0.7px;background:#9a9a9a;"></div>
<svg style="left:0;top:0;overflow:visible" width="1" height="1"><text x="0" y="0" font-family="Liberation Sans" font-size="5.8" font-weight="normal" font-style="normal" fill="#111" text-anchor="middle" transform="translate(8.5 201.25) rotate(-90)">5</text></svg>
<div style="left:6px;top:209.82500000000002px;width:1.2px;height:0.7px;background:#8a8a8a;"></div>
<div style="left:6.3px;top:205.3625px;width:0.8px;height:0.7px;background:#9a9a9a;"></div>
<div style="left:6.3px;top:214.2875px;width:0.8px;height:0.7px;background:#9a9a9a;"></div>
<svg style="left:0;top:0;overflow:visible" width="1" height="1"><text x="0" y="0" font-family="Liberation Sans" font-size="5.8" font-weight="normal" font-style="normal" fill="#111" text-anchor="middle" transform="translate(8.5 219.10000000000002) rotate(-90)">6</text></svg>
<div style="left:6px;top:227.67500000000004px;width:1.2px;height:0.7px;background:#8a8a8a;"></div>
<div style="left:6.3px;top:223.21250000000003px;width:0.8px;height:0.7px;background:#9a9a9a;"></div>
<div style="left:6.3px;top:232.13750000000002px;width:0.8px;height:0.7px;background:#9a9a9a;"></div>
<svg style="left:0;top:0;overflow:visible" width="1" height="1"><text x="0" y="0" font-family="Liberation Sans" font-size="5.8" font-weight="normal" font-style="normal" fill="#111" text-anchor="middle" transform="translate(8.5 236.95000000000002) rotate(-90)">7</text></svg>
<div style="left:6px;top:245.52500000000003px;width:1.2px;height:0.7px;background:#8a8a8a;"></div>
<div style="left:6.3px;top:241.06250000000003px;width:0.8px;height:0.7px;background:#9a9a9a;"></div>
<div style="left:6.3px;top:249.9875px;width:0.8px;height:0.7px;background:#9a9a9a;"></div>
<svg style="left:0;top:0;overflow:visible" width="1" height="1"><text x="0" y="0" font-family="Liberation Sans" font-size="5.8" font-weight="normal" font-style="normal" fill="#111" text-anchor="middle" transform="translate(8.5 254.8) rotate(-90)">8</text></svg>
<div style="left:6px;top:263.375px;width:1.2px;height:0.7px;background:#8a8a8a;"></div>
<div style="left:6.3px;top:258.91249999999997px;width:0.8px;height:0.7px;background:#9a9a9a;"></div>
<div style="left:6.3px;top:267.8375px;width:0.8px;height:0.7px;background:#9a9a9a;"></div>
<svg style="left:0;top:0;overflow:visible" width="1" height="1"><text x="0" y="0" font-family="Liberation Sans" font-size="5.8" font-weight="normal" font-style="normal" fill="#111" text-anchor="middle" transform="translate(8.5 272.65) rotate(-90)">9</text></svg>
<div style="left:6px;top:281.22499999999997px;width:1.2px;height:0.7px;background:#8a8a8a;"></div>
<div style="left:6.3px;top:276.76249999999993px;width:0.8px;height:0.7px;background:#9a9a9a;"></div>
<div style="left:6.3px;top:285.68749999999994px;width:0.8px;height:0.7px;background:#9a9a9a;"></div>
<svg style="left:0;top:0;overflow:visible" width="1" height="1"><text x="0" y="0" font-family="Liberation Sans" font-size="5.8" font-weight="normal" font-style="normal" fill="#111" text-anchor="middle" transform="translate(8.5 290.5) rotate(-90)">10</text></svg>
<div style="left:6px;top:299.075px;width:1.2px;height:0.7px;background:#8a8a8a;"></div>
<div style="left:6.3px;top:294.61249999999995px;width:0.8px;height:0.7px;background:#9a9a9a;"></div>
<div style="left:6.3px;top:303.53749999999997px;width:0.8px;height:0.7px;background:#9a9a9a;"></div>
<svg style="left:0;top:0;overflow:visible" width="1" height="1"><text x="0" y="0" font-family="Liberation Sans" font-size="5.8" font-weight="normal" font-style="normal" fill="#111" text-anchor="middle" transform="translate(8.5 308.35) rotate(-90)">11</text></svg>
<div style="left:6px;top:316.925px;width:1.2px;height:0.7px;background:#8a8a8a;"></div>
<div style="left:6.3px;top:312.4625px;width:0.8px;height:0.7px;background:#9a9a9a;"></div>
<div style="left:6.3px;top:321.3875px;width:0.8px;height:0.7px;background:#9a9a9a;"></div>
<svg style="left:0;top:0;overflow:visible" width="1" height="1"><text x="0" y="0" font-family="Liberation Sans" font-size="5.8" font-weight="normal" font-style="normal" fill="#111" text-anchor="middle" transform="translate(8.5 326.20000000000005) rotate(-90)">12</text></svg>
<div style="left:6px;top:334.77500000000003px;width:1.2px;height:0.7px;background:#8a8a8a;"></div>
<div style="left:6.3px;top:330.3125px;width:0.8px;height:0.7px;background:#9a9a9a;"></div>
<div style="left:6.3px;top:339.2375px;width:0.8px;height:0.7px;background:#9a9a9a;"></div>
<svg style="left:0;top:0;overflow:visible" width="1" height="1"><text x="0" y="0" font-family="Liberation Sans" font-size="5.8" font-weight="normal" font-style="normal" fill="#111" text-anchor="middle" transform="translate(8.5 344.05) rotate(-90)">13</text></svg>
<div style="left:6px;top:352.625px;width:1.2px;height:0.7px;background:#8a8a8a;"></div>
<div style="left:6.3px;top:348.16249999999997px;width:0.8px;height:0.7px;background:#9a9a9a;"></div>
<div style="left:6.3px;top:357.0875px;width:0.8px;height:0.7px;background:#9a9a9a;"></div>
<svg style="left:0;top:0;overflow:visible" width="1" height="1"><text x="0" y="0" font-family="Liberation Sans" font-size="5.8" font-weight="normal" font-style="normal" fill="#111" text-anchor="middle" transform="translate(8.5 361.90000000000003) rotate(-90)">14</text></svg>
<div style="left:6px;top:370.475px;width:1.2px;height:0.7px;background:#8a8a8a;"></div>
<div style="left:6.3px;top:366.0125px;width:0.8px;height:0.7px;background:#9a9a9a;"></div>
<div style="left:6.3px;top:374.9375px;width:0.8px;height:0.7px;background:#9a9a9a;"></div>
<svg style="left:0;top:0;overflow:visible" width="1" height="1"><text x="0" y="0" font-family="Liberation Sans" font-size="5.8" font-weight="normal" font-style="normal" fill="#111" text-anchor="middle" transform="translate(8.5 379.75) rotate(-90)">15</text></svg>
<div style="left:6px;top:388.325px;width:1.2px;height:0.7px;background:#8a8a8a;"></div>
<div style="left:6.3px;top:383.86249999999995px;width:0.8px;height:0.7px;background:#9a9a9a;"></div>
<div style="left:6.3px;top:392.78749999999997px;width:0.8px;height:0.7px;background:#9a9a9a;"></div>
<svg style="left:0;top:0;overflow:visible" width="1" height="1"><text x="0" y="0" font-family="Liberation Sans" font-size="5.8" font-weight="normal" font-style="normal" fill="#111" text-anchor="middle" transform="translate(8.5 397.6) rotate(-90)">16</text></svg>
<div style="left:6px;top:406.175px;width:1.2px;height:0.7px;background:#8a8a8a;"></div>
<div style="left:6.3px;top:401.7125px;width:0.8px;height:0.7px;background:#9a9a9a;"></div>
<div style="left:6.3px;top:410.6375px;width:0.8px;height:0.7px;background:#9a9a9a;"></div>
<svg style="left:573.8px;top:49.3px" width="4.4" height="3.4" viewBox="0 0 4.4 3.4"><path d="M0.5 2.8l1.7-2 1.7 2" stroke="#6a6a6a" stroke-width="0.8" fill="none"/></svg>
<svg style="left:573.8px;top:387.6px" width="4.4" height="3.4" viewBox="0 0 4.4 3.4"><path d="M0.5 0.6l1.7 2 1.7-2" stroke="#6a6a6a" stroke-width="0.8" fill="none"/></svg>
<div style="left:573.2px;top:393.90000000000003px;width:5.6px;height:5.8px;background:#e9e9e9;box-sizing:border-box;border:0.5px solid #d6d6d6"></div>
<svg style="left:573.8px;top:394.5px" width="4.4" height="4.6" viewBox="0 0 4.4 4.6"><path d="M0.5 2.2l1.7-1.8 1.7 1.8zM0.5 4.3l1.7-1.8 1.7 1.8z" fill="#222"/></svg>
<div style="left:573.2px;top:401.1px;width:5.6px;height:5.8px;background:#e9e9e9;box-sizing:border-box;border:0.5px solid #d6d6d6"></div>
<svg style="left:573.8px;top:401.7px" width="4.4" height="4.6" viewBox="0 0 4.4 4.6"><circle cx="2.2" cy="2.3" r="1.3" fill="none" stroke="#555" stroke-width="0.7"/></svg>
<div style="left:573.2px;top:408.1px;width:5.6px;height:5.8px;background:#e9e9e9;box-sizing:border-box;border:0.5px solid #d6d6d6"></div>
<svg style="left:573.8px;top:408.7px" width="4.4" height="4.6" viewBox="0 0 4.4 4.6"><path d="M0.5 0.3l1.7 1.8 1.7-1.8zM0.5 2.4l1.7 1.8 1.7-1.8z" fill="#222"/></svg>
<svg style="left:2.3px;top:416.5px" width="3.4" height="4.4" viewBox="0 0 3.4 4.4"><path d="M2.6 0.5l-1.9 1.7 1.9 1.7" stroke="#555" stroke-width="0.8" fill="none"/></svg>
<svg style="left:567.3px;top:416.4px" width="3.4" height="4.4" viewBox="0 0 3.4 4.4"><path d="M0.8 0.5l1.9 1.7-1.9 1.7" stroke="#555" stroke-width="0.8" fill="none"/></svg>
<svg style="left:588.5px;top:52px" width="6" height="6" viewBox="0 0 6 6"><path d="M0.8 1.4l2.2 1.6" stroke="#666" stroke-width="0.9"/><path d="M2.4 2.4h3L3.9 5z" fill="#222"/></svg>
<div style="left:584.3px;top:64.6px;width:11px;height:12px;background:#e8f1f9;box-sizing:border-box;border:0.5px solid #d0dcea"></div>
<svg style="left:585px;top:65.6px" width="9.6" height="10" viewBox="0 0 11 11"><rect x="0.6" y="1.5" width="5" height="8.4" fill="#4496e0"/><rect x="5" y="0.6" width="5.4" height="9.8" fill="#84cc48"/><rect x="1.8" y="3" width="2.6" height="2" fill="#c8e4f8"/><rect x="5.6" y="4" width="2.4" height="2.600" fill="#48a8cc"/><rect x="1.8" y="6.600" width="3" height="1.600" fill="#3474c0"/><rect x="7.6" y="2" width="1.800" height="1.600" fill="#d8f0b8"/></svg>
<svg style="left:584.6px;top:80.4px" width="10.4" height="10.4" viewBox="0 0 12 12"><circle cx="6" cy="6" r="5.4" fill="#f6e8ea"/><path d="M2 10.5l2-6 3-3 2.400 2.400-2.600 4z" fill="#2a60b8"/><path d="M5.400 1.200l1.800-0.600 1.200 2.400-1.600 1z" fill="#14141c"/><path d="M1.200 11l3.400-2.600" stroke="#222" stroke-width="0.9"/><path d="M8.600 5.200l2.200-0.600M8.400 6.800l2 0.800" stroke="#48a8a0" stroke-width="1"/><circle cx="9.600" cy="3.200" r="0.9" fill="#e09a38"/><circle cx="2.400" cy="3.400" r="0.8" fill="#48b8d8"/></svg>
<svg style="left:584.6px;top:96px" width="10.400" height="10.400" viewBox="0 0 12 12"><rect x="1.500" y="2.500" width="8" height="6.500" fill="#eef4f4" stroke="#a8bcc0" stroke-width="0.7"/><path d="M2.500 8l2-2.600 1.600 1.600 1.200-1 1.400 2z" fill="#86b8a0"/><circle cx="8.600" cy="4.200" r="1.700" fill="#68b068"/><path d="M8.600 2.800v2.800M7.200 4.200h2.800" stroke="#e8f8e8" stroke-width="0.6"/></svg>
<svg style="left:584.8px;top:111px" width="10" height="10" viewBox="0 0 12 12"><circle cx="6" cy="6" r="4.600" fill="#f4f0f6" stroke="#e8b23c" stroke-width="1.500"/><path d="M3.600 8.600l1.600-3.600 3.400-1.800-1.600 3.600z" fill="#5060cc"/><path d="M3.600 8.600l1.600-3.600 1.800 1.800z" fill="#c05070"/></svg>
<svg style="left:0;top:0" width="600" height="432" viewBox="0 0 600 432"><g id="ln" fill="none" stroke="#161616" stroke-linecap="round" stroke-linejoin="round" stroke-width="0.95"><path d="M263.6 118.7c-0.9-0.7-1.8-0.2-1.5 0.5c0.3 0.7 1.5 0.5 2-0.4c1.5-0.9 4-1.6 6.7-2.0" stroke-width="0.8"/><circle cx="262.7" cy="118.9" r="0.55" fill="#161616" stroke="none"/><path d="M269.4 116.9c-0.5 3.5-1.1 7-1.6 10.6" stroke-width="1"/><path d="M271.0 125.2c1.2 -0.6 2.4 -2.2 2.2 -3.4 c-0.2 -1 -1.3 -0.4 -1.6 1.4 c-0.3 1.8 0 4.2 0.9 4.2 c0.7 0 1.4 -0.8 1.9 -1.8"/><path d="M274.3 121.6c0.8 0.2 1.1 1.6 1.3 2.9c0.2 1.4 0.6 2.9 1.6 2.9"/><path d="M277.8 121.3c-1.3 1.6-2.6 4-3.6 6.2" stroke-width="0.7"/><path d="M279.6 117.6c-0.4 3-0.9 6-1 8.4c0 1.2 0.7 1.6 1.4 1.0" stroke-width="0.95"/><path d="M277.4 119.7c2-0.3 4.4-0.5 6.6-0.5" stroke-width="0.7"/><path d="M282.6 121.3c-1.2 0-1.9 2-1.8 3.8c0.1 1.8 1.2 2.6 2.1 1.8c0.9-0.8 1.4-3.4 0.8-4.8c-0.3-0.7-0.9-0.9-1.1-0.8c0.6 0.9 2.2 1.1 3.4 0.4"/><path d="M290.8 122.0c-1.3-1-2.6 0.6-2.7 2.8c-0.1 2 1 3.2 2 2.2c0.9-0.9 1.2-5.4 1.5-10.4c-0.5 4-0.9 8-0.6 10c0.1 1 0.8 1.2 1.5 0.4" stroke-width="0.9"/><path d="M292.6 125.2c1.2 -0.6 2.4 -2.2 2.2 -3.4 c-0.2 -1 -1.3 -0.4 -1.6 1.4 c-0.3 1.8 0 4.2 0.9 4.2 c0.7 0 1.4 -0.8 1.9 -1.8"/><path d="M300.6 120.4c-0.4 3.6-1.0 7.4-1.6 11.0" stroke-width="1"/><path d="M300.4 122.4c0.7-1.3 2.0-1.8 2.4-0.6c0.4 1.4-0.4 4.2-1.6 5.2c-0.6 0.5-1.2 0.2-1.4-0.3"/><path d="M303.8 121.2c0.5 0.6 0.4 3.4 0 6.2c0.3-2.6 0.9-5.2 1.8-6c0.5-0.4 1-0.2 1 0.5"/><path d="M307.4 121.2c-0.5 2.2-0.9 4.8-0.3 5.8c0.6 1 1.7-0.4 2.4-2.6c0.2-1 0.4-2.2 0.6-3.2c-0.4 2.2-0.7 4.800-0.3 5.800c0.2 0.7 0.8 0.600 1.300-0.200"/><path d="M311.2 125.2c1.2 -0.6 2.4 -2.2 2.2 -3.4 c-0.2 -1 -1.3 -0.4 -1.6 1.4 c-0.3 1.8 0 4.2 0.9 4.2 c0.7 0 1.4 -0.8 1.9 -1.8"/><path d="M315.600 116.700c-0.500 3.600-1 7-1.100 10c0.500 1 1.700 0.800 2.400-0.600c0.700-1.400 0.700-4-0.100-4.600c-0.600-0.400-1.300 0.400-1.700 1.400" stroke-width="0.95"/><path d="M321.200 122c-1.200-1-2.400 0.400-2.600 2.600c-0.200 2 0.800 3.400 1.700 2.400c0.600-0.700 1-2.800 1.200-5c-0.200 2-0.400 4.400 0 5.200c0.300 0.600 0.800 0.400 1.300-0.200"/></g><use href="#ln" y="21"/><use href="#ln" y="42"/><use href="#ln" y="63"/></svg>
<div style="left:81px;top:44px;width:114.6px;height:119px;background:#fff;box-sizing:border-box;border:0.8px solid #707070"></div>
<div style="left:188px;top:45px;width:6.6px;height:117px;background:#f2f2f2;"></div>
<div style="left:188.4px;top:84.4px;width:5.8px;height:7px;background:#cdcdcd;"></div>
<svg style="left:189.5px;top:48px" width="3.4" height="3" viewBox="0 0 3.4 3"><path d="M0.5 2.300l1.200-1.500 1.200 1.500" stroke="#777" stroke-width="0.7" fill="none"/></svg>
<svg style="left:189.6px;top:157.600px" width="3.4" height="3" viewBox="0 0 3.4 3"><path d="M0.5 0.700l1.200 1.500 1.200-1.500" stroke="#777" stroke-width="0.7" fill="none"/></svg>
<div style="left:82px;top:94px;width:105.8px;height:9.7px;background:#3296fa;"></div>
<svg style="left:0;top:0;overflow:visible" width="1" height="1"><text x="83" y="52.3" font-family="Liberation Sans" font-size="7" font-weight="bold" font-style="normal" fill="#3d4f74" textLength="4.2" lengthAdjust="spacingAndGlyphs" stroke="#3d4f74" stroke-width="0.3">A</text></svg>
<svg style="left:0;top:0;overflow:visible" width="1" height="1"><text x="86.3" y="52.3" font-family="Liberation Sans" font-size="7" font-weight="bold" font-style="normal" fill="#b8483c" textLength="3.7" lengthAdjust="spacingAndGlyphs" stroke="#b8483c" stroke-width="0.3">B</text></svg>
<svg style="left:0;top:0;overflow:visible" width="1" height="1"><text x="90.8" y="52.3" font-family="Liberation Sans" font-size="7.3" font-weight="normal" font-style="normal" fill="#3c3c3c" textLength="17.6" lengthAdjust="spacingAndGlyphs" >Gisha</text></svg>
<svg style="left:0;top:0;overflow:visible" width="1" height="1"><text x="83" y="62.129999999999995" font-family="Liberation Sans" font-size="7" font-weight="bold" font-style="normal" fill="#3d4f74" textLength="4.2" lengthAdjust="spacingAndGlyphs" stroke="#3d4f74" stroke-width="0.3">A</text></svg>
<svg style="left:0;top:0;overflow:visible" width="1" height="1"><text x="86.3" y="62.129999999999995" font-family="Liberation Sans" font-size="7" font-weight="bold" font-style="normal" fill="#b8483c" textLength="3.7" lengthAdjust="spacingAndGlyphs" stroke="#b8483c" stroke-width="0.3">B</text></svg>
<svg style="left:0;top:0;overflow:visible" width="1" height="1"><text x="90.8" y="62.129999999999995" font-family="Liberation Sans" font-size="7.3" font-weight="normal" font-style="normal" fill="#5a5a5a" textLength="16.6" lengthAdjust="spacingAndGlyphs" >Gulim</text></svg>
<svg style="left:0;top:0;overflow:visible" width="1" height="1"><text x="83" y="71.96" font-family="Liberation Sans" font-size="7" font-weight="bold" font-style="normal" fill="#3d4f74" textLength="4.2" lengthAdjust="spacingAndGlyphs" stroke="#3d4f74" stroke-width="0.3">A</text></svg>
<svg style="left:0;top:0;overflow:visible" width="1" height="1"><text x="86.3" y="71.96" font-family="Liberation Sans" font-size="7" font-weight="bold" font-style="normal" fill="#b8483c" textLength="3.7" lengthAdjust="spacingAndGlyphs" stroke="#b8483c" stroke-width="0.3">B</text></svg>
<svg style="left:0;top:0;overflow:visible" width="1" height="1"><text x="90.8" y="71.96" font-family="Liberation Sans" font-size="7.1" font-weight="normal" font-style="normal" fill="#6a6a6a" textLength="30.4" lengthAdjust="spacing" >GulimChe</text></svg>
<svg style="left:0;top:0;overflow:visible" width="1" height="1"><text x="83" y="81.78999999999999" font-family="Liberation Sans" font-size="7" font-weight="bold" font-style="normal" fill="#3d4f74" textLength="4.2" lengthAdjust="spacingAndGlyphs" stroke="#3d4f74" stroke-width="0.3">A</text></svg>
<svg style="left:0;top:0;overflow:visible" width="1" height="1"><text x="86.3" y="81.78999999999999" font-family="Liberation Sans" font-size="7" font-weight="bold" font-style="normal" fill="#b8483c" textLength="3.7" lengthAdjust="spacingAndGlyphs" stroke="#b8483c" stroke-width="0.3">B</text></svg>
<svg style="left:0;top:0;overflow:visible" width="1" height="1"><text x="90.8" y="81.78999999999999" font-family="Liberation Serif" font-size="7.3" font-weight="bold" font-style="normal" fill="#111" textLength="27.2" lengthAdjust="spacingAndGlyphs" stroke="#111" stroke-width="0.25">Gungsuh</text></svg>
<svg style="left:0;top:0;overflow:visible" width="1" height="1"><text x="83" y="91.62" font-family="Liberation Sans" font-size="7" font-weight="bold" font-style="normal" fill="#3d4f74" textLength="4.2" lengthAdjust="spacingAndGlyphs" stroke="#3d4f74" stroke-width="0.3">A</text></svg>
<svg style="left:0;top:0;overflow:visible" width="1" height="1"><text x="86.3" y="91.62" font-family="Liberation Sans" font-size="7" font-weight="bold" font-style="normal" fill="#b8483c" textLength="3.7" lengthAdjust="spacingAndGlyphs" stroke="#b8483c" stroke-width="0.3">B</text></svg>
<svg style="left:0;top:0;overflow:visible" width="1" height="1"><text x="90.8" y="91.62" font-family="Liberation Serif" font-size="7.3" font-weight="bold" font-style="normal" fill="#111" textLength="38" lengthAdjust="spacingAndGlyphs" stroke="#111" stroke-width="0.25">GungsuhChe</text></svg>
<svg style="left:0;top:0;overflow:visible" width="1" height="1"><text x="83" y="101.24999999999999" font-family="Liberation Sans" font-size="7" font-weight="bold" font-style="normal" fill="#3d4f74" textLength="4.2" lengthAdjust="spacingAndGlyphs" stroke="#3d4f74" stroke-width="0.3">A</text></svg>
<svg style="left:0;top:0;overflow:visible" width="1" height="1"><text x="86.3" y="101.24999999999999" font-family="Liberation Sans" font-size="7" font-weight="bold" font-style="normal" fill="#b8483c" textLength="3.7" lengthAdjust="spacingAndGlyphs" stroke="#b8483c" stroke-width="0.3">B</text></svg>
<svg style="left:0;top:0;overflow:visible" width="1" height="1"><text x="90.8" y="101.24999999999999" font-family="Liberation Serif" font-size="7" font-weight="normal" font-style="italic" fill="#bcdcff" textLength="21.5" lengthAdjust="spacingAndGlyphs" stroke="#bcdcff" stroke-width="0.2">Honey Script</text></svg>
<svg style="left:0;top:0;overflow:visible" width="1" height="1"><text x="83" y="111.28" font-family="Liberation Sans" font-size="7" font-weight="bold" font-style="normal" fill="#3d4f74" textLength="4.2" lengthAdjust="spacingAndGlyphs" stroke="#3d4f74" stroke-width="0.3">A</text></svg>
<svg style="left:0;top:0;overflow:visible" width="1" height="1"><text x="86.3" y="111.28" font-family="Liberation Sans" font-size="7" font-weight="bold" font-style="normal" fill="#b8483c" textLength="3.7" lengthAdjust="spacingAndGlyphs" stroke="#b8483c" stroke-width="0.3">B</text></svg>
<svg style="left:0;top:0;overflow:visible" width="1" height="1"><text x="90.8" y="111.28" font-family="Liberation Sans" font-size="7.8" font-weight="bold" font-style="normal" fill="#000" textLength="20.2" lengthAdjust="spacingAndGlyphs" stroke="#000" stroke-width="0.45">Impact</text></svg>
<svg style="left:0;top:0;overflow:visible" width="1" height="1"><text x="83" y="120.51" font-family="Liberation Sans" font-size="7" font-weight="bold" font-style="normal" fill="#3d4f74" textLength="4.2" lengthAdjust="spacingAndGlyphs" stroke="#3d4f74" stroke-width="0.3">A</text></svg>
<svg style="left:0;top:0;overflow:visible" width="1" height="1"><text x="86.3" y="120.51" font-family="Liberation Sans" font-size="7" font-weight="bold" font-style="normal" fill="#b8483c" textLength="3.7" lengthAdjust="spacingAndGlyphs" stroke="#b8483c" stroke-width="0.3">B</text></svg>
<svg style="left:0;top:0;overflow:visible" width="1" height="1"><text x="90.8" y="120.51" font-family="Liberation Sans" font-size="4" font-weight="normal" font-style="normal" fill="#444" textLength="14" lengthAdjust="spacingAndGlyphs" >IrisUPC</text></svg>
<svg style="left:0;top:0;overflow:visible" width="1" height="1"><text x="83" y="130.94" font-family="Liberation Sans" font-size="7" font-weight="bold" font-style="normal" fill="#3d4f74" textLength="4.2" lengthAdjust="spacingAndGlyphs" stroke="#3d4f74" stroke-width="0.3">A</text></svg>
<svg style="left:0;top:0;overflow:visible" width="1" height="1"><text x="86.3" y="130.94" font-family="Liberation Sans" font-size="7" font-weight="bold" font-style="normal" fill="#b8483c" textLength="3.7" lengthAdjust="spacingAndGlyphs" stroke="#b8483c" stroke-width="0.3">B</text></svg>
<svg style="left:0;top:0;overflow:visible" width="1" height="1"><text x="90.8" y="130.94" font-family="Liberation Serif" font-size="7.4" font-weight="normal" font-style="normal" fill="#222" textLength="36.2" lengthAdjust="spacingAndGlyphs" >Iskoola Pota</text></svg>
<svg style="left:0;top:0;overflow:visible" width="1" height="1"><text x="83" y="140.17" font-family="Liberation Sans" font-size="7" font-weight="bold" font-style="normal" fill="#3d4f74" textLength="4.2" lengthAdjust="spacingAndGlyphs" stroke="#3d4f74" stroke-width="0.3">A</text></svg>
<svg style="left:0;top:0;overflow:visible" width="1" height="1"><text x="86.3" y="140.17" font-family="Liberation Sans" font-size="7" font-weight="bold" font-style="normal" fill="#b8483c" textLength="3.7" lengthAdjust="spacingAndGlyphs" stroke="#b8483c" stroke-width="0.3">B</text></svg>
<svg style="left:0;top:0;overflow:visible" width="1" height="1"><text x="90.8" y="140.17" font-family="Liberation Serif" font-size="4.6" font-weight="normal" font-style="normal" fill="#444" textLength="25" lengthAdjust="spacingAndGlyphs" >JasmineUPC</text></svg>
<svg style="left:0;top:0;overflow:visible" width="1" height="1"><text x="83" y="149.7" font-family="Liberation Sans" font-size="7" font-weight="bold" font-style="normal" fill="#3d4f74" textLength="4.2" lengthAdjust="spacingAndGlyphs" stroke="#3d4f74" stroke-width="0.3">A</text></svg>
<svg style="left:0;top:0;overflow:visible" width="1" height="1"><text x="86.3" y="149.7" font-family="Liberation Sans" font-size="7" font-weight="bold" font-style="normal" fill="#b8483c" textLength="3.7" lengthAdjust="spacingAndGlyphs" stroke="#b8483c" stroke-width="0.3">B</text></svg>
<svg style="left:0;top:0;overflow:visible" width="1" height="1"><text x="90.8" y="149.7" font-family="Liberation Serif" font-size="7.2" font-weight="normal" font-style="normal" fill="#222" textLength="42.2" lengthAdjust="spacingAndGlyphs" >Javanese Text</text></svg>
<svg style="left:0;top:0;overflow:visible" width="1" height="1"><text x="83" y="160.43" font-family="Liberation Sans" font-size="7" font-weight="bold" font-style="normal" fill="#3d4f74" textLength="4.2" lengthAdjust="spacingAndGlyphs" stroke="#3d4f74" stroke-width="0.3">A</text></svg>
<svg style="left:0;top:0;overflow:visible" width="1" height="1"><text x="86.3" y="160.43" font-family="Liberation Sans" font-size="7" font-weight="bold" font-style="normal" fill="#b8483c" textLength="3.7" lengthAdjust="spacingAndGlyphs" stroke="#b8483c" stroke-width="0.3">B</text></svg>
<svg style="left:0;top:0;overflow:visible" width="1" height="1"><text x="90.8" y="160.43" font-family="Liberation Sans" font-size="6.5" font-weight="normal" font-style="normal" fill="#444" textLength="17.2" lengthAdjust="spacing" >KaiTi</text></svg>
<div style="left:0px;top:422px;width:600px;height:10px;background:#f0f0f0;"></div>
<svg style="left:0;top:0;overflow:visible" width="1" height="1"><text x="4" y="430" font-family="Liberation Sans" font-size="5.5" font-weight="normal" font-style="normal" fill="#222" textLength="28" lengthAdjust="spacingAndGlyphs" >Página 1 / 1</text></svg>
<svg style="left:0;top:0;overflow:visible" width="1" height="1"><text x="106" y="430" font-family="Liberation Sans" font-size="5.5" font-weight="normal" font-style="normal" fill="#222" textLength="37" lengthAdjust="spacingAndGlyphs" >Predeterminado</text></svg>
<svg style="left:0;top:0;overflow:visible" width="1" height="1"><text x="248" y="430" font-family="Liberation Sans" font-size="5.5" font-weight="normal" font-style="normal" fill="#222" textLength="17" lengthAdjust="spacingAndGlyphs" >Catalán</text></svg>
<svg style="left:0;top:0;overflow:visible" width="1" height="1"><text x="305.6" y="430" font-family="Liberation Sans" font-size="5.5" font-weight="normal" font-style="normal" fill="#222" textLength="15.4" lengthAdjust="spacingAndGlyphs" >INSERT</text></svg>
<svg style="left:0;top:0;overflow:visible" width="1" height="1"><text x="327" y="430" font-family="Liberation Sans" font-size="5.5" font-weight="normal" font-style="normal" fill="#222" textLength="9" lengthAdjust="spacingAndGlyphs" >STD</text></svg>
<svg style="left:0;top:0;overflow:visible" width="1" height="1"><text x="341.3" y="431" font-family="Liberation Sans" font-size="5.5" font-weight="normal" font-style="normal" fill="#222" >*</text></svg>
<div style="left:103.3px;top:423.5px;width:0.6px;height:7.5px;background:#cfcfcf;"></div>
<div style="left:211px;top:423.5px;width:0.6px;height:7.5px;background:#cfcfcf;"></div>
<div style="left:303.6px;top:423.5px;width:0.6px;height:7.5px;background:#cfcfcf;"></div>
<div style="left:325px;top:423.5px;width:0.6px;height:7.5px;background:#cfcfcf;"></div>
<div style="left:339px;top:423.5px;width:0.6px;height:7.5px;background:#cfcfcf;"></div>
<div style="left:345.4px;top:423.5px;width:0.6px;height:7.5px;background:#cfcfcf;"></div>
<div style="left:355.6px;top:423.5px;width:0.6px;height:7.5px;background:#cfcfcf;"></div>
<div style="left:519px;top:423.5px;width:0.6px;height:7.5px;background:#cfcfcf;"></div>
<div style="left:581.5px;top:423.5px;width:0.6px;height:7.5px;background:#cfcfcf;"></div>
<svg style="left:490px;top:423.5px" width="7" height="8" viewBox="0 0 7 8"><path d="M1.2 0.8h3l1.6 1.6v4.8h-4.6z" fill="#fafafa" stroke="#9a9aa0" stroke-width="0.6"/></svg>
<svg style="left:496.5px;top:423.5px" width="10" height="8" viewBox="0 0 10 8"><rect x="0.6" y="0.8" width="4" height="6" fill="#dcebfa" stroke="#4a82c8" stroke-width="0.8"/><rect x="5.2" y="0.8" width="4" height="6" fill="#dcebfa" stroke="#4a82c8" stroke-width="0.8"/></svg>
<svg style="left:507px;top:424px" width="10" height="7" viewBox="0 0 10 7"><path d="M0.8 1.2q2-0.8 4 0.4q2-1.2 4-0.4v4.6q-2-0.8-4 0.4q-2-1.2-4-0.4z" fill="#f8f8f8" stroke="#9a9aa0" stroke-width="0.6"/><path d="M4.8 1.6v4.6" stroke="#9a9aa0" stroke-width="0.5"/></svg>
<div style="left:529px;top:427.3px;width:43.5px;height:0.6px;background:#9a9aa0;"></div>
<div style="left:542.4px;top:425px;width:0.6px;height:5.2px;background:#9a9aa0;"></div>
<svg style="left:522.5px;top:424.7px" width="6" height="6" viewBox="0 0 6 6"><circle cx="3" cy="3" r="2.3" fill="#e6e6ea" stroke="#8a8a92" stroke-width="0.6"/><path d="M1.8 3h2.4" stroke="#555" stroke-width="0.6"/></svg>
<svg style="left:572.4px;top:424.7px" width="6" height="6" viewBox="0 0 6 6"><circle cx="3" cy="3" r="2.3" fill="#e6e6ea" stroke="#8a8a92" stroke-width="0.6"/><path d="M1.8 3h2.4M3 1.8v2.4" stroke="#555" stroke-width="0.6"/></svg>
<svg style="left:547.8px;top:425.3px" width="5" height="5" viewBox="0 0 5 5"><circle cx="2.5" cy="2.3" r="1.8" fill="#4a4e58"/><path d="M1.4 3.4h2.2L2.5 4.8z" fill="#4a4e58"/></svg>
<svg style="left:0;top:0;overflow:visible" width="1" height="1"><text x="584.3" y="430" font-family="Liberation Sans" font-size="5.5" font-weight="normal" font-style="normal" fill="#222" textLength="11.5" lengthAdjust="spacingAndGlyphs" >110%</text></svg>
</div></body></html>
